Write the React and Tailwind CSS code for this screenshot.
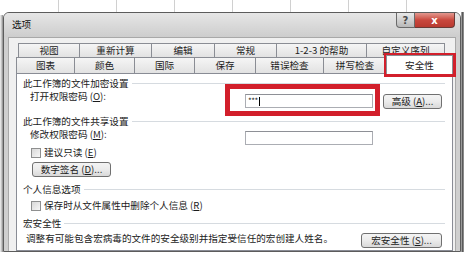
import React from "react";

function Tab({ w, children, last }) {
  return (
    <div
      className={
        "h-full flex items-center justify-center border-t border-l border-[#8a8d94] bg-gradient-to-b from-[#f5f5f5] to-[#e2e2e2] shrink-0 " +
        (last ? "border-r " : "") +
        w
      }
    >
      {children}
    </div>
  );
}

function Heading({ children, className }) {
  return (
    <div className={"flex items-center h-[11px] " + className}>
      <span className="shrink-0">{children}</span>
      <div className="flex-1 h-px bg-[#d6dbe0] ml-[3px]" />
    </div>
  );
}

function Btn({ children, className }) {
  return (
    <div
      className={
        "flex items-center justify-center rounded-[3px] border border-[#707070] bg-gradient-to-b from-[#f4f4f4] via-[#ebebeb] to-[#d9d9d9] shrink-0 " +
        className
      }
    >
      {children}
    </div>
  );
}

function Check() {
  return (
    <div className="w-[10px] h-[10px] border border-[#8e8f8f] bg-gradient-to-br from-[#d8d8d8] to-[#f7f7f7] shrink-0" />
  );
}

export default function App() {
  return (
    <div className="relative w-[464px] h-[253px] overflow-hidden bg-white text-[9.6px] leading-[11px] text-[#1b1b1b] font-['Noto_Sans_CJK_SC',sans-serif]">
      {/* spreadsheet behind */}
      <div className="h-[13px] flex">
        <div className="w-[59px] h-full border-r border-[#d0d0d0] shrink-0" />
        <div className="w-[58px] h-full border-r border-[#d0d0d0] shrink-0" />
        <div className="w-[58px] h-full border-r border-[#d0d0d0] shrink-0" />
        <div className="w-[58px] h-full border-r border-[#d0d0d0] shrink-0" />
        <div className="w-[58px] h-full border-r border-[#d0d0d0] shrink-0" />
        <div className="w-[58px] h-full border-r border-[#d0d0d0] shrink-0" />
        <div className="w-[58px] h-full border-r border-[#d0d0d0] shrink-0" />
        <div className="w-[57px] h-full shrink-0" />
      </div>

      <div className="flex h-[240px] -mt-px">
        <div className="w-[3px] flex mt-[3px]">
          <div className="w-px bg-[#e4e4e4]" />
          <div className="w-px bg-[#c4c4c4]" />
          <div className="w-px bg-[#9c9c9c]" />
        </div>
        {/* dialog */}
        <div className="w-[458px] flex flex-col rounded-t-[6px] border border-[#5c5c5c] bg-[#cfcfcf] overflow-hidden">
          {/* title bar */}
          <div className="h-[24px] flex justify-between items-start pr-[5px] bg-gradient-to-b from-[#e6e6e6] to-[#cdcdcd] shrink-0">
            <div className="pl-[8px] pt-[6px] text-[#111]">选项</div>
            <div className="flex">
              <div className="w-[19px] h-[15px] flex items-center justify-center border border-t-0 border-[#6a6a6a] rounded-bl-[4px] bg-gradient-to-b from-[#e9e9e9] to-[#b9b9b9] text-[#4a4a4a] text-[10px] font-bold font-['DejaVu_Sans',sans-serif]">
                ?
              </div>
              <div className="w-[40px] h-[15px] flex items-center justify-center border border-t-0 border-l-0 border-[#6a3a36] rounded-br-[4px] bg-gradient-to-b from-[#e2978f] via-[#c9483e] to-[#b93a30] text-white text-[10px] font-bold font-['DejaVu_Sans',sans-serif]">
                x
              </div>
            </div>
          </div>
          {/* body */}
          <div className="flex-1 flex">
            <div className="w-[4px] bg-[#cfcfcf] shrink-0" />
            <div className="w-[447px] bg-[#f0f0f0] pl-[7px] pt-[5px] flex flex-col border-l border-t border-[#a8a8a8]">
              {/* tab row 1 */}
              <div className="h-[14px] flex ml-[2px] text-[#222]">
                <Tab w="w-[61px]">视图</Tab>
                <Tab w="w-[72px]">重新计算</Tab>
                <Tab w="w-[63px]">编辑</Tab>
                <Tab w="w-[62px]">常规</Tab>
                <Tab w="w-[90px]">1-2-3 的帮助</Tab>
                <Tab w="w-[79px]" last>
                  自定义序列
                </Tab>
              </div>
              {/* tab row 2 */}
              <div className="h-[16px] flex items-end text-[#222]">
                <Tab w="w-[58px]">图表</Tab>
                <Tab w="w-[60px]">颜色</Tab>
                <Tab w="w-[60px]">国际</Tab>
                <Tab w="w-[61px]">保存</Tab>
                <Tab w="w-[68px]">错误检查</Tab>
                <Tab w="w-[63px]">拼写检查</Tab>
                <div className="relative z-10 w-[67px] h-[19px] -mb-px flex items-center justify-center border border-b-0 border-[#8a8d94] bg-white shrink-0">
                  安全性
                </div>
              </div>
              {/* panel */}
              <div className="w-[437px] flex-1 border border-[#898c95] bg-white pl-[6px] pr-[7px] flex flex-col">
                <Heading className="mt-[4px]">此工作簿的文件加密设置</Heading>
                <div className="flex items-start pl-[7px] mt-[2px]">
                  <div className="w-[215px] shrink-0">
                    打开权限密码 (<span className="underline">O</span>):
                  </div>
                  <div className="w-[128px] h-[14px] mt-[3px] border border-[#abadb3] border-t-[#8e9096] bg-white flex items-center pl-[2px] shrink-0">
                    <span className="text-[8px] leading-[8px] tracking-[-0.5px]">***</span>
                    <span className="w-px h-[9px] bg-black ml-[1px]" />
                  </div>
                  <Btn className="w-[59px] h-[15px] mt-[3px] ml-[10px]">
                    高级 (<span className="underline">A</span>)...
                  </Btn>
                </div>
                <Heading className="mt-[7px]">此工作簿的文件共享设置</Heading>
                <div className="flex items-start pl-[7px] mt-[2px]">
                  <div className="w-[215px] shrink-0">
                    修改权限密码 (<span className="underline">M</span>):
                  </div>
                  <div className="w-[128px] h-[14px] mt-[2px] border border-[#abadb3] border-t-[#8e9096] bg-white shrink-0" />
                </div>
                <div className="flex items-center pl-[8px] mt-[2px] h-[11px]">
                  <Check />
                  <span className="ml-[3px]">
                    建议只读 (<span className="underline">E</span>)
                  </span>
                </div>
                <Btn className="w-[79px] h-[15px] mt-[4px] ml-[9px]">
                  数字签名 (<span className="underline">D</span>)...
                </Btn>
                <Heading className="mt-[7px]">个人信息选项</Heading>
                <div className="flex items-center pl-[8px] mt-[5px] h-[11px]">
                  <Check />
                  <span className="ml-[3px]">
                    保存时从文件属性中删除个人信息 (<span className="underline">R</span>)
                  </span>
                </div>
                <Heading className="mt-[7px]">宏安全性</Heading>
                <div className="flex items-start justify-between pl-[3px] pr-[3px] mt-[4px]">
                  <span>调整有可能包含宏病毒的文件的安全级别并指定受信任的宏创建人姓名。</span>
                  <Btn className="w-[81px] h-[15px]">
                    宏安全性 (<span className="underline">S</span>)...
                  </Btn>
                </div>
              </div>
            </div>
            <div className="w-[5px] bg-[#cfcfcf] border-l border-[#a8a8a8] shrink-0" />
          </div>
        </div>
        <div className="flex-1 flex">
          <div className="w-px bg-[#9a9a9a]" />
          <div className="w-px bg-[#5a5a5a]" />
          <div className="flex-1 bg-[#8a8a8a]" />
        </div>
      </div>

      {/* red annotation boxes */}
      <div className="absolute left-[384px] top-[53px] w-[72px] h-[24px] border-[4px] border-[#d21f2b]" />
      <div className="absolute left-[225px] top-[84px] w-[155px] h-[32px] border-[5px] border-[#d21f2b]" />
    </div>
  );
}
